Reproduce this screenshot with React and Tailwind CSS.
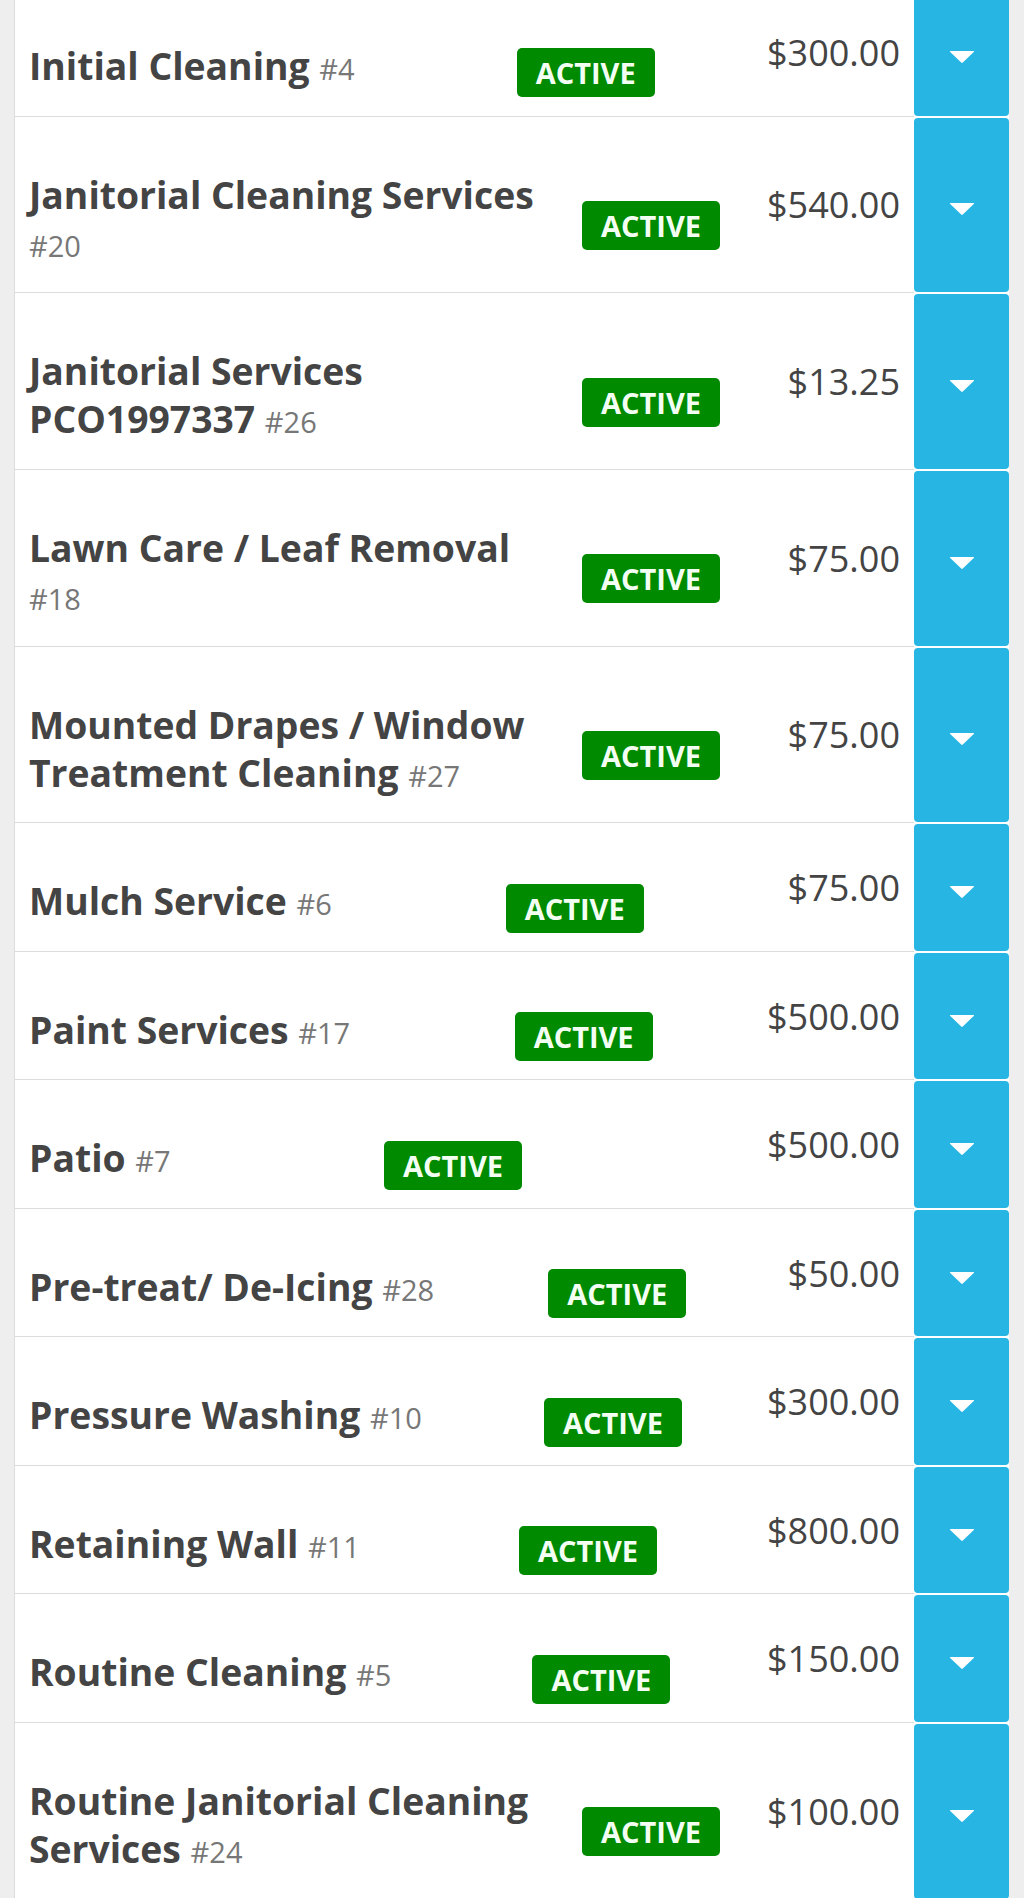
import React from "react";

const SERVICES = [
    { name: "Initial Cleaning", id: 4, price: "$300.00" },
    { name: "Janitorial Cleaning Services", id: 20, price: "$540.00" },
    { name: "Janitorial Services PCO1997337", id: 26, price: "$13.25" },
    { name: "Lawn Care / Leaf Removal", id: 18, price: "$75.00" },
    { name: "Mounted Drapes / Window Treatment Cleaning", id: 27, price: "$75.00" },
    { name: "Mulch Service", id: 6, price: "$75.00" },
    { name: "Paint Services", id: 17, price: "$500.00" },
    { name: "Patio", id: 7, price: "$500.00" },
    { name: "Pre-treat/ De-Icing", id: 28, price: "$50.00" },
    { name: "Pressure Washing", id: 10, price: "$300.00" },
    { name: "Retaining Wall", id: 11, price: "$800.00" },
    { name: "Routine Cleaning", id: 5, price: "$150.00" },
    { name: "Routine Janitorial Cleaning Services", id: 24, price: "$100.00" },
];

const CaretDown = () => (
    <svg width="26" height="14" viewBox="0 0 26 14" className="mt-[9px]">
        <path d="M1.5 1 L24.5 1 Q25.6 1 24.8 1.9 L13.8 12.6 Q13 13.4 12.2 12.6 L1.2 1.9 Q0.4 1 1.5 1 Z" fill="#ffffff" />
    </svg>
);

const ServiceRow = ({ service }) => {
    return (
        <div className="flex items-stretch bg-white">
            <div className="flex flex-1 border-b border-[#dcdcdc]">
                <table className="w-[705px] shrink-0 border-collapse">
                    <tbody>
                        <tr>
                            <td className="pl-[14px] pt-[54px] pb-[25.3px] align-top text-[37.3px] leading-[48.2px] font-bold text-[#444444]">
                                {service.name} <span className="text-[29px] leading-none font-normal text-[#777777]">#{service.id}</span>
                            </td>
                            <td className="pl-[30px] pt-[42px] align-middle">
                                <span className="inline-block whitespace-nowrap rounded-[5px] bg-[#008a00] px-[19px] text-[29px] leading-[49px] font-bold text-[#f4fff4]">
                                    ACTIVE
                                </span>
                            </td>
                        </tr>
                    </tbody>
                </table>
                <div className="flex flex-1 items-center justify-end pr-[14px] pt-[2px] text-[36px] text-[#444444]">
                    {service.price}
                </div>
            </div>
            <button className="my-px flex w-[95px] items-center justify-center rounded-[4px] bg-[#27b5e3]">
                <CaretDown />
            </button>
        </div>
    );
};

export default function App() {
    return (
        <div className="min-h-[1898px] overflow-hidden bg-[#eeeeee] font-['Open_Sans',sans-serif]">
            <div className="ml-[14px] mr-[15px] mt-[-12px] border-l border-[#dcdcdc] bg-white">
                {SERVICES.map((service) => (
                    <ServiceRow key={service.id} service={service} />
                ))}
            </div>
        </div>
    );
}
